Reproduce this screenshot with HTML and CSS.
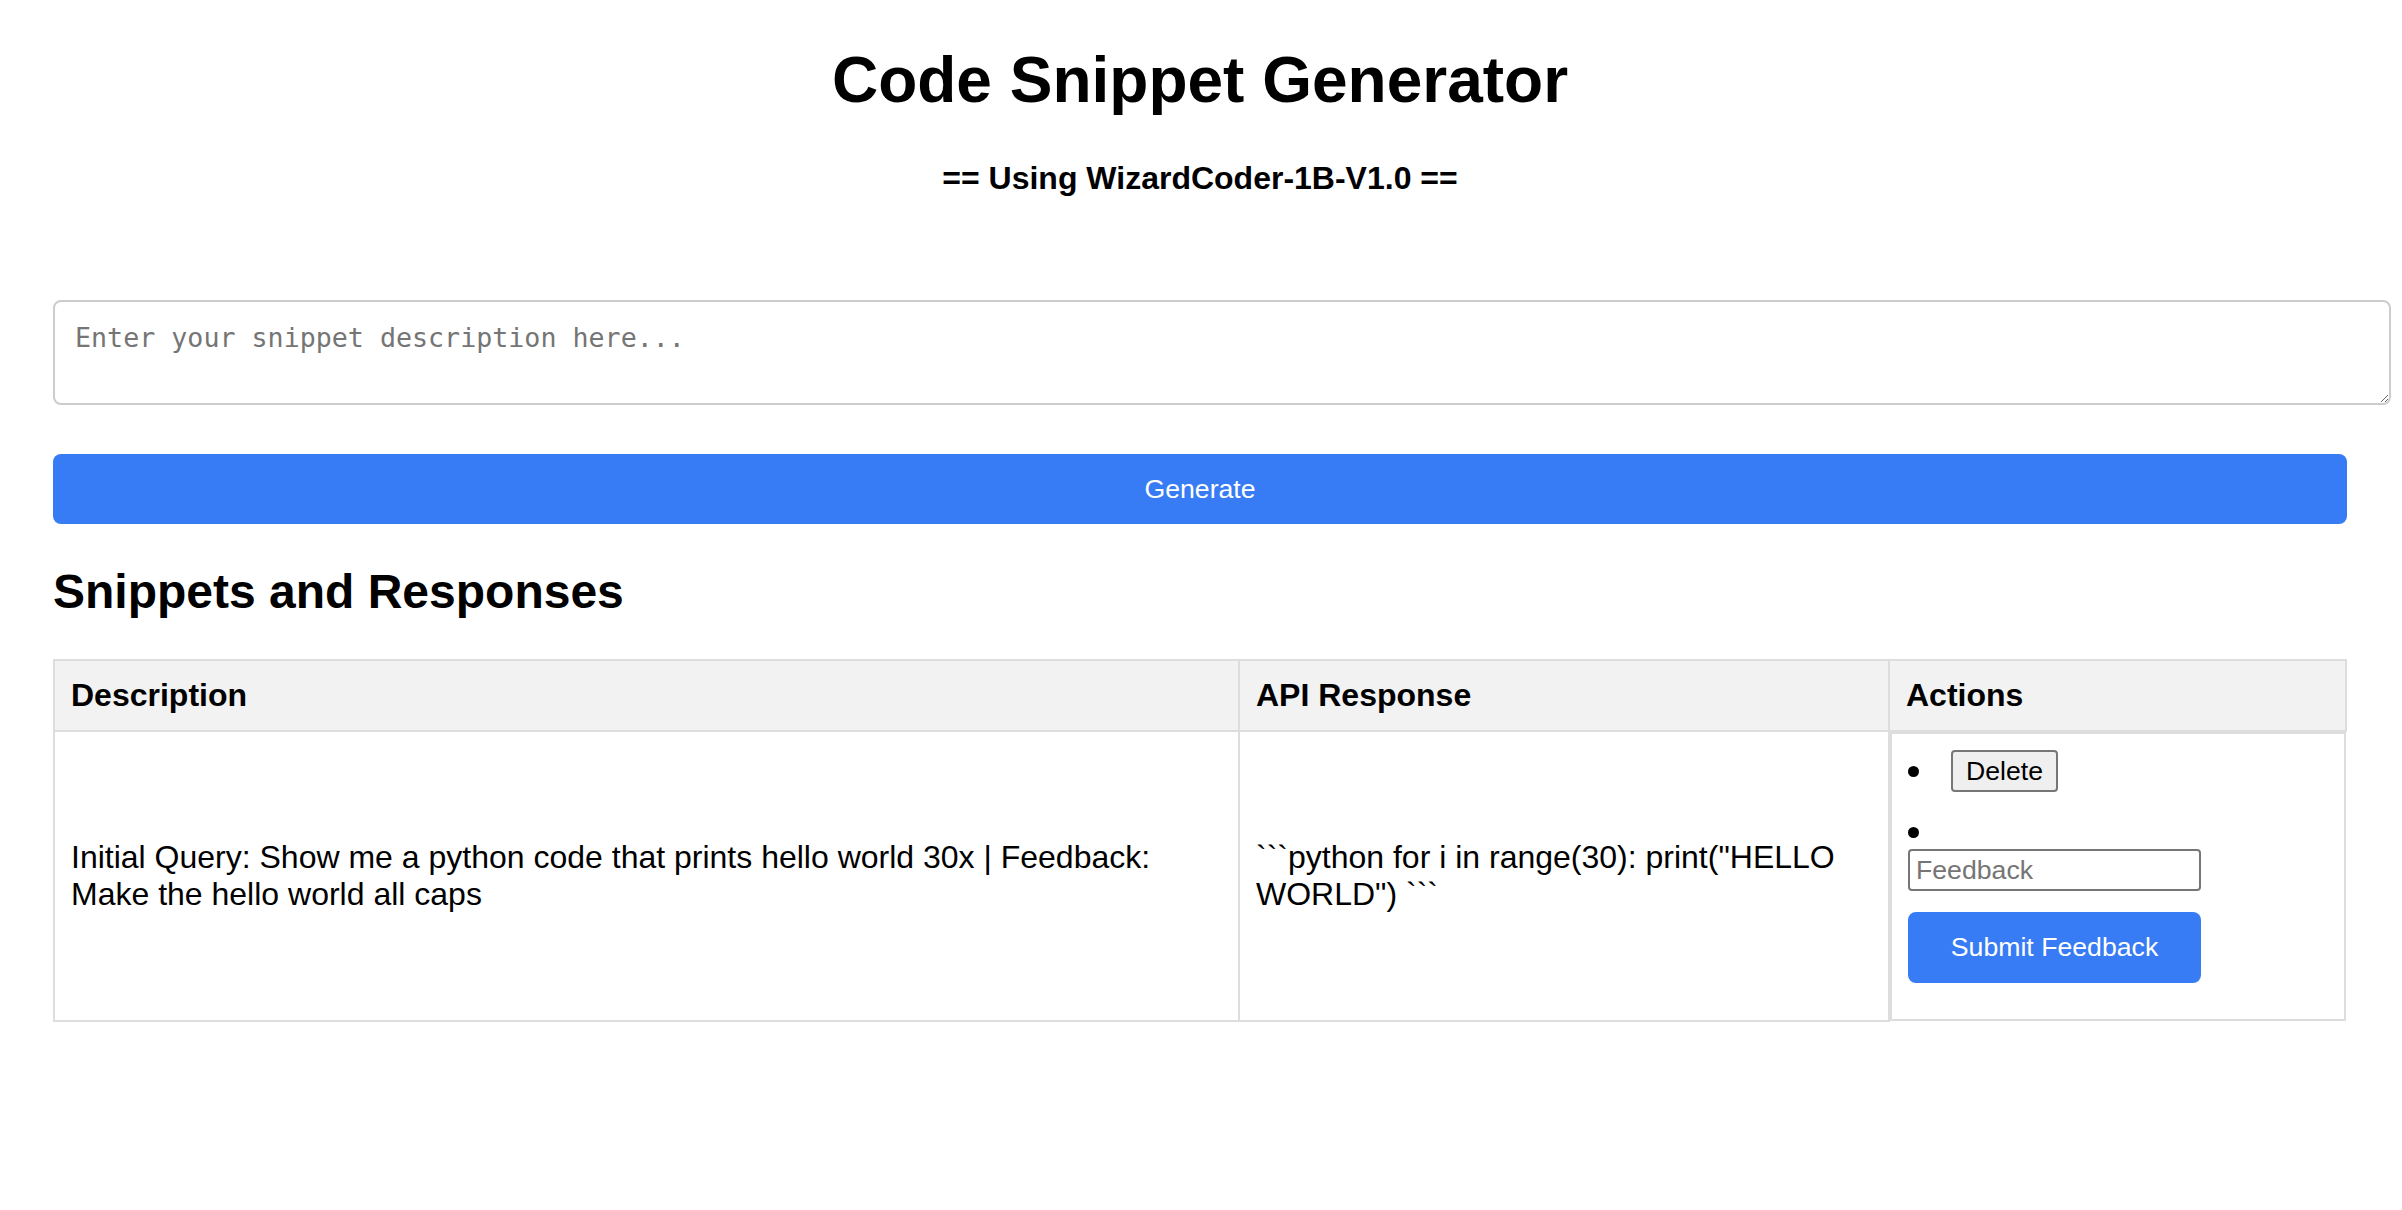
FILE: index.html
```html
<!DOCTYPE html>
<html lang="en">
<head>
<meta charset="utf-8">
<title>Code Snippet Generator</title>
<link rel="stylesheet" href="styles.css">
</head>
<body>
<main class="app">
  <h1 class="title">Code Snippet Generator</h1>
  <h4 class="subtitle">== Using WizardCoder-1B-V1.0 ==</h4>
  <textarea class="prompt" placeholder="Enter your snippet description here..."></textarea>
  <button class="btn btn-generate" type="button">Generate</button>
  <h2 class="section-title">Snippets and Responses</h2>
  <table class="snippets">
    <colgroup>
      <col class="col-desc">
      <col class="col-resp">
      <col class="col-actions">
    </colgroup>
    <thead>
      <tr>
        <th>Description</th>
        <th>API Response</th>
        <th>Actions</th>
      </tr>
    </thead>
    <tbody>
      <tr>
        <td>Initial Query: Show me a python code that prints hello world 30x | Feedback: Make the hello world all caps</td>
        <td>```python for i in range(30): print("HELLO WORLD") ```</td>
        <td class="actions-cell">
          <ul class="actions">
            <li class="action-item action-delete"><button class="btn-delete" type="button">Delete</button></li>
            <li class="action-item action-feedback">
              <input class="feedback-input" type="text" placeholder="Feedback">
              <button class="btn btn-submit" type="button">Submit Feedback</button>
            </li>
          </ul>
        </td>
      </tr>
    </tbody>
  </table>
</main>
</body>
</html>
```
FILE: styles.css
```css
html, body {
  margin: 0;
  padding: 0;
  background: #ffffff;
}

body {
  font-family: "Liberation Sans", Arial, Helvetica, sans-serif;
  font-size: 32px;
  color: #000000;
}

.app {
  padding: 0 55px 0 53px;
}

.title {
  font-size: 64px;
  font-weight: bold;
  text-align: center;
  margin: 42.88px 0;
}

.subtitle {
  font-size: 32px;
  font-weight: bold;
  text-align: center;
  margin: 42.56px 0 0;
}

.prompt {
  display: block;
  box-sizing: border-box;
  width: calc(100% + 44px);
  height: 105px;
  margin: 103px 0 0;
  padding: 20px;
  border: 2px solid #cccccc;
  border-radius: 8px;
  font-family: "DejaVu Sans Mono", "Liberation Mono", monospace;
  font-size: 26.67px;
  color: #000000;
  background: #ffffff;
}

.prompt::placeholder {
  color: #757575;
}

.btn {
  border: none;
  border-radius: 8px;
  background: #377bf5;
  color: #ffffff;
  font-family: "Liberation Sans", Arial, Helvetica, sans-serif;
  font-size: 26.67px;
  line-height: 30.67px;
  padding: 20px 0;
  cursor: pointer;
}

.btn-generate {
  display: block;
  width: 100%;
  margin-top: 49px;
}

.section-title {
  font-size: 48px;
  font-weight: bold;
  margin: 39.84px 0;
}

.snippets {
  width: calc(100% - 2px);
  border-collapse: collapse;
  table-layout: fixed;
}

.col-desc { width: 1185px; }
.col-resp { width: 650px; }
.col-actions { width: 457px; }

.snippets th,
.snippets td {
  border: 2px solid #dddddd;
  padding: 16px;
  text-align: left;
  vertical-align: middle;
  line-height: normal;
}

.snippets th {
  background: #f2f2f2;
  font-weight: bold;
}

.snippets td.actions-cell {
  border: none;
  padding: 0;
}

.actions {
  list-style: none;
  margin: 0;
  padding: 16px;
  border: 2px solid #dddddd;
}

.action-item::before {
  content: "";
  width: 11px;
  height: 11px;
  border-radius: 50%;
  background: #000000;
}

.action-delete {
  display: flex;
  align-items: center;
  margin-bottom: 20px;
}

.action-delete::before {
  display: inline-block;
  flex: none;
}

.action-feedback {
  padding-top: 15px;
}

.action-feedback::before {
  display: block;
  margin: 0 0 11px;
}

.btn-delete {
  box-sizing: border-box;
  height: 42px;
  margin-left: 32px;
  padding: 0 13px;
  border: 2px solid #767676;
  border-radius: 4px;
  background: #efefef;
  color: #000000;
  font-family: "Liberation Sans", Arial, Helvetica, sans-serif;
  font-size: 26.67px;
}

.feedback-input {
  display: block;
  box-sizing: border-box;
  width: 293px;
  height: 42px;
  margin: 0;
  padding: 0 6px;
  border: 2px solid #767676;
  border-radius: 4px;
  font-family: "Liberation Sans", Arial, Helvetica, sans-serif;
  font-size: 26.67px;
  color: #000000;
}

.feedback-input::placeholder {
  color: #757575;
}

.btn-submit {
  display: block;
  width: 293px;
  margin: 21px 0 20px;
}
```
